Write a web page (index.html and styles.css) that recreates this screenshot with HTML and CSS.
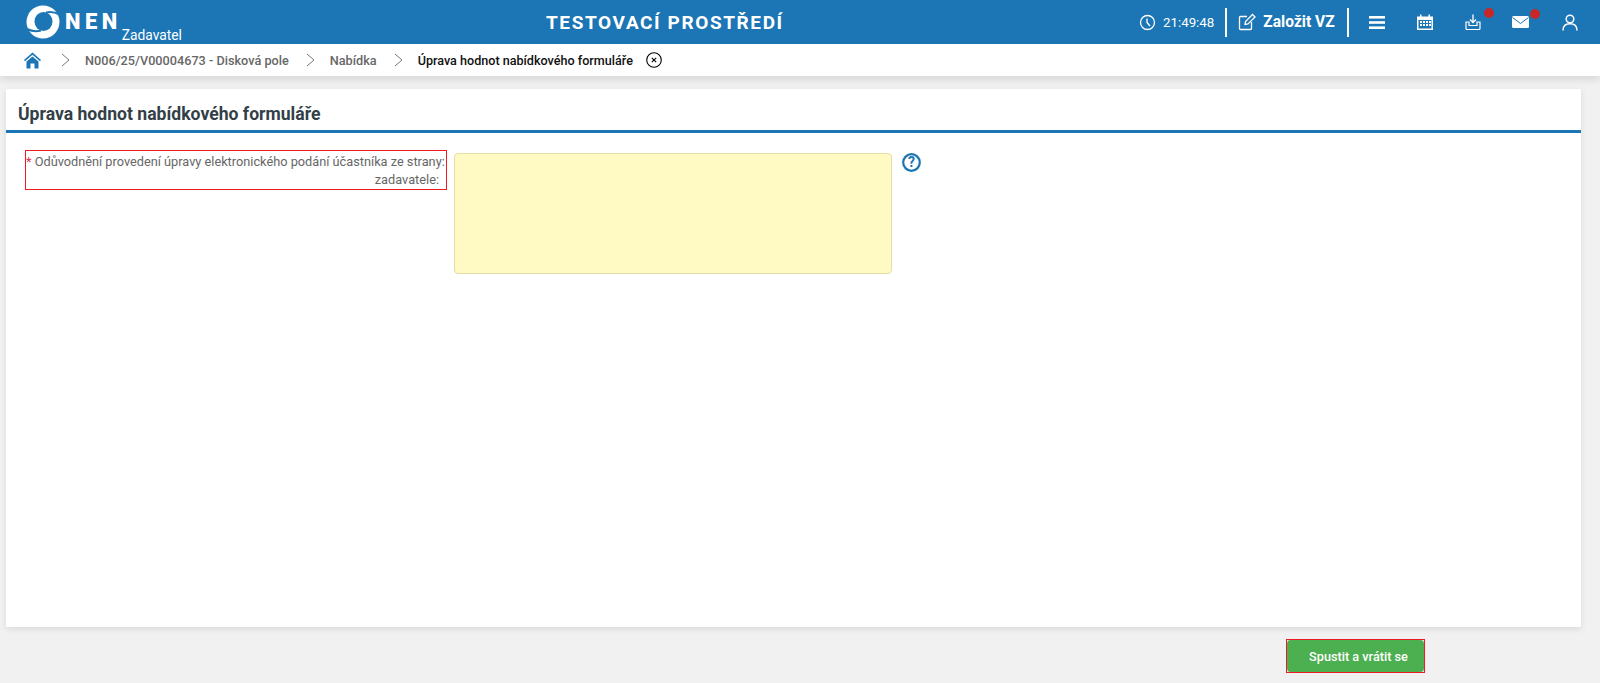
FILE: index.html
```html
<!DOCTYPE html>
<html lang="cs">
<head>
<meta charset="utf-8">
<title>Úprava hodnot nabídkového formuláře</title>
<link rel="stylesheet" href="styles.css">
</head>
<body>
<header class="topbar">
  <div class="brand">
    <svg class="logo" width="34" height="34" viewBox="0 0 34 34"><circle cx="17" cy="17" r="16.500" fill="#fff"/><ellipse cx="17.500" cy="16.500" rx="9" ry="9.500" fill="#1c75b4"/><path d="M20 7.500C25 6.500 29 7 33 9.500" fill="none" stroke="#1c75b4" stroke-width="2"/><path d="M15 25.500C10 27 6 26.500 1 24" fill="none" stroke="#1c75b4" stroke-width="2"/></svg>
    <span class="nen">NEN</span>
    <span class="role">Zadavatel</span>
  </div>
  <div class="env">TESTOVACÍ PROSTŘEDÍ</div>
  <div class="tools">
    <svg class="ic-clock" width="17" height="17" viewBox="0 0 17 17" fill="none" stroke="#fff" stroke-width="1.300"><circle cx="8.500" cy="8.500" r="7"/><path d="M8 4.500V8.500L11 12"/></svg>
    <span class="time">21:49:48</span>
    <span class="sep sep-first"></span>
    <svg class="ic-edit" width="18" height="18" viewBox="0 0 18 18" fill="none" stroke="#fff" stroke-width="1.300"><path d="M9 3.500H2.500A1 1 0 0 0 1.500 4.500V15.500A1 1 0 0 0 2.500 16.500H12.500A1 1 0 0 0 13.500 15.500V9"/><path d="M7 11.500L7.500 8.500L14.500 1.500L17 4L10 11Z"/></svg>
    <span class="create">Založit VZ</span>
    <span class="sep"></span>
    <svg class="ic-menu" width="16" height="13" viewBox="0 0 16 13" fill="#fff"><rect y="0" width="16" height="2.600"/><rect y="5.200" width="16" height="2.600"/><rect y="10.400" width="16" height="2.600"/></svg>
    <svg class="ic-cal" width="16" height="16" viewBox="0 0 16 16"><path fill="#fff" d="M0 2.500H3V0.500H4.500V2.500H11.500V0.500H13V2.500H16V16H0Z"/><path fill="#1c75b4" d="M1.500 6H14.500V14.500H1.500Z"/><g fill="#fff"><rect x="3" y="7" width="2" height="2"/><rect x="6" y="7" width="2" height="2"/><rect x="9" y="7" width="2" height="2"/><rect x="12" y="7" width="2" height="2"/><rect x="3" y="10" width="2" height="2"/><rect x="6" y="10" width="2" height="2"/><rect x="9" y="10" width="2" height="2"/><rect x="12" y="10" width="2" height="2"/></g></svg>
    <span class="badged ic-down">
      <svg width="16" height="16" viewBox="0 0 16 16" fill="none" stroke="#fff" stroke-width="1.300"><path d="M8 0.500V8M5 5.500L8 8.500L11 5.500"/><path d="M4 8H1V14.500A1 1 0 0 0 2 15.500H14A1 1 0 0 0 15 14.500V8H12V11.500H4Z" stroke-width="1.200"/></svg>
      <span class="dot"></span>
    </span>
    <span class="badged ic-mail">
      <svg width="17" height="12" viewBox="0 0 17 12"><rect width="17" height="12" rx="1.500" fill="#fff"/><path d="M0.500 1.500L8.500 7.500L16.500 1.500" fill="none" stroke="#1c75b4" stroke-width="1"/></svg>
      <span class="dot"></span>
    </span>
    <svg class="ic-user" width="16" height="17" viewBox="0 0 16 17" fill="none" stroke="#fff" stroke-width="1.500"><circle cx="8" cy="5" r="3.800"/><path d="M1 16.500C1 12 4 9.800 8 9.800C12 9.800 15 12 15 16.500"/></svg>
  </div>
</header>
<nav class="crumbs">
  <svg class="home" width="17" height="17" viewBox="0 0 17 17" fill="#1c75b4"><path d="M8.500 0.500L17 8L16 9.200L8.500 2.800L1 9.200L0 8Z"/><path d="M8.500 4.500L14.500 9.500V16.500H10.500V11.500H6.500V16.500H2.500V9.500Z"/></svg>
  <svg class="chev" width="9" height="14" viewBox="0 0 9 14" fill="none" stroke="#77787a" stroke-width="1"><path d="M1 1L8 7L1 13"/></svg>
  <a class="crumb">N006/25/V00004673 - Disková pole</a>
  <svg class="chev" width="9" height="14" viewBox="0 0 9 14" fill="none" stroke="#77787a" stroke-width="1"><path d="M1 1L8 7L1 13"/></svg>
  <a class="crumb">Nabídka</a>
  <svg class="chev" width="9" height="14" viewBox="0 0 9 14" fill="none" stroke="#77787a" stroke-width="1"><path d="M1 1L8 7L1 13"/></svg>
  <span class="crumb current">Úprava hodnot nabídkového formuláře</span>
  <svg class="close" width="16" height="16" viewBox="0 0 16 16" fill="none" stroke="#000" stroke-width="1.100"><circle cx="8" cy="8" r="7.300"/><path d="M5.800 5.800L10.200 10.200M10.200 5.800L5.800 10.200"/></svg>
</nav>
<main class="card">
  <h1 class="title">Úprava hodnot nabídkového formuláře</h1>
  <div class="form-row">
    <label class="label"><span class="req">*</span> Odůvodnění provedení úpravy elektronického podání účastníka ze strany<span class="colon">:</span><br>zadavatele:</label>
    <textarea class="input"></textarea>
    <svg class="help" width="19" height="19" viewBox="0 0 19 19" fill="none"><circle cx="9.500" cy="9.500" r="8.300" stroke="#1c75b4" stroke-width="2.200"/><text x="9.500" y="14" text-anchor="middle" class="help-q">?</text></svg>
  </div>
</main>
<footer class="actions">
  <button class="btn"><span class="btn-face">Spustit a vrátit se</span></button>
</footer>
</body>
</html>
```
FILE: styles.css
```css
* { box-sizing: border-box; }
html, body { margin: 0; padding: 0; }
body {
  width: 1600px; height: 683px; overflow: hidden;
  background: #f1f1f1;
  font-family: Roboto, "Liberation Sans", sans-serif;
  display: flex; flex-direction: column;
}
.topbar {
  height: 44px; background: #1c75b4; color: #fff;
  display: grid; grid-template-columns: 546px auto 1fr; align-items: center;
  flex: none;
}
.brand { display: flex; align-items: center; padding-left: 26px; height: 44px; }
.logo { flex: none; margin-top: -1px; }
.nen { font-size: 22px; font-weight: 900; letter-spacing: 4.500px; margin-left: 5px; margin-top: -2px; }
.role { font-size: 13.800px; align-self: flex-end; margin-left: 0; line-height: 16px; padding-bottom: 1px; }
.env { font-size: 19px; font-weight: 700; letter-spacing: 1.600px; }
.tools { display: flex; align-items: center; justify-self: end; height: 44px; width: 461px; }
.time { font-size: 13.300px; margin-left: 7px; }
.sep { width: 2px; height: 29px; background: #fff; margin: 0 12px; }
.sep-first { margin: 0 11px; }
.create { font-size: 15.600px; font-weight: 700; margin-left: 7px; }
.ic-menu { margin-left: 8px; }
.ic-cal { margin-left: 32px; }
.ic-down { margin-left: 32px; }
.ic-mail { margin-left: 31px; }
.ic-user { margin-left: 33px; }
.badged { position: relative; display: flex; }
.dot { position: absolute; top: -6px; right: -13px; width: 10px; height: 10px; border-radius: 50%; background: #c62828; }
.ic-mail .dot { top: -7px; right: -11px; }
.crumbs {
  height: 32px; background: #fff; flex: none;
  display: flex; align-items: center; padding-left: 24px;
  box-shadow: 0 3px 8px rgba(0,0,0,.12);
  position: relative;
  font-size: 12.700px; font-weight: 500; color: #676767;
}
.home { margin-right: 20px; }
.chev { flex: none; margin-right: 15px; }
.crumb { margin-right: 17px; }
.current { color: #111; font-size: 12.600px; margin-right: 13px; }
.card {
  margin: 13px 0 0 6px; width: 1575px; height: 538px; background: #fff; flex: none;
  box-shadow: 0 2px 6px rgba(0,0,0,.1);
}
.title {
  margin: 0; height: 44px; padding: 14px 0 0 12px;
  font-size: 17.600px; line-height: 22px; font-weight: 700; color: #333f48;
  border-bottom: 3px solid #1c75b4;
}
.form-row { display: flex; align-items: flex-start; padding: 17px 0 0 19px; }
.label {
  width: 422px; height: 40px; border: 1px solid #ed1c24;
  font-size: 12.750px; line-height: 18px; color: #666; text-align: right;
  padding: 2px 7px 0 0; flex: none; white-space: nowrap;
}
.colon { margin-right: -5px; }
.req { color: #d9304f; }
.input {
  width: 438px; height: 121px; margin: 3px 0 0 7px; background: #fff9c4;
  border: 1px solid #e6dda6; border-radius: 4px; resize: none; outline: none; flex: none;
}
.help { margin: 3px 0 0 10px; flex: none; }
.help-q { font-family: Roboto, sans-serif; font-size: 14px; font-weight: 700; fill: #1c75b4; }
.actions { display: flex; padding: 12px 0 0 1286px; }
.btn {
  width: 139px; height: 34px; background: #e4e4e4; color: #fff; display: flex;
  border: 1px solid #ed1c24; border-radius: 0; padding: 0;
  font: 500 12.700px Roboto, sans-serif;
}
.btn-face {
  flex: 1; align-self: stretch; background: #4caf50; border-radius: 4px;
  display: flex; align-items: center; justify-content: center; padding-left: 6px;
}
```
